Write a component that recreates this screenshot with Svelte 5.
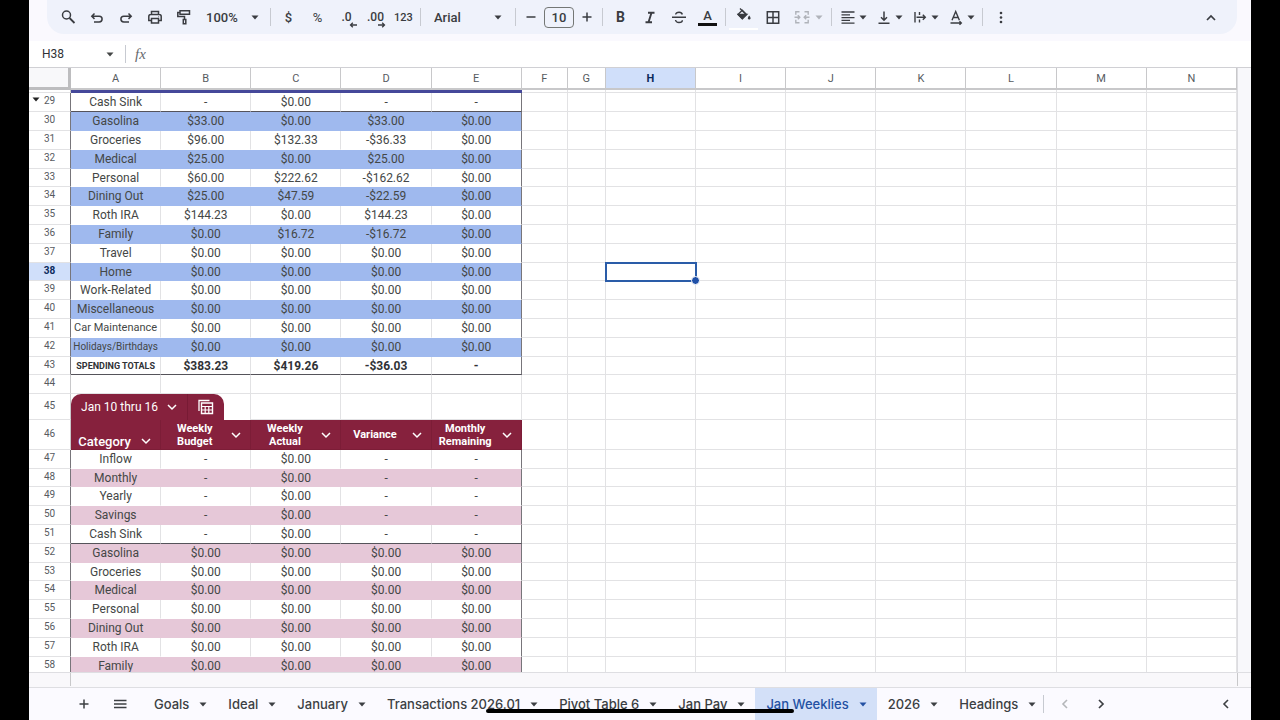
<script>
    const columns = ['A', 'B', 'C', 'D', 'E', 'F', 'G', 'H', 'I', 'J', 'K', 'L', 'M', 'N'];
    const spare = columns.slice(5);

    const none = ['-', '$0.00', '-', '-'];
    const zero = ['$0.00', '$0.00', '$0.00', '$0.00'];

    const rows = [
        { n: 29, name: 'Cash Sink', values: none, theme: 'blue', edge: true },
        { n: 30, name: 'Gasolina', values: ['$33.00', '$0.00', '$33.00', '$0.00'], theme: 'blue' },
        { n: 31, name: 'Groceries', values: ['$96.00', '$132.33', '-$36.33', '$0.00'], theme: 'blue' },
        { n: 32, name: 'Medical', values: ['$25.00', '$0.00', '$25.00', '$0.00'], theme: 'blue' },
        { n: 33, name: 'Personal', values: ['$60.00', '$222.62', '-$162.62', '$0.00'], theme: 'blue' },
        { n: 34, name: 'Dining Out', values: ['$25.00', '$47.59', '-$22.59', '$0.00'], theme: 'blue' },
        { n: 35, name: 'Roth IRA', values: ['$144.23', '$0.00', '$144.23', '$0.00'], theme: 'blue' },
        { n: 36, name: 'Family', values: ['$0.00', '$16.72', '-$16.72', '$0.00'], theme: 'blue' },
        { n: 37, name: 'Travel', values: zero, theme: 'blue' },
        { n: 38, name: 'Home', values: zero, theme: 'blue' },
        { n: 39, name: 'Work-Related', values: zero, theme: 'blue' },
        { n: 40, name: 'Miscellaneous', values: zero, theme: 'blue' },
        { n: 41, name: 'Car Maintenance', values: zero, theme: 'blue', size: 'small' },
        { n: 42, name: 'Holidays/Birthdays', values: zero, theme: 'blue', size: 'smaller' },
        { n: 43, name: 'SPENDING TOTALS', values: ['$383.23', '$419.26', '-$36.03', '-'], theme: 'blue', total: true, edge: true },
        { n: 44, kind: 'blank' },
        { n: 45, kind: 'tab' },
        { n: 46, kind: 'head' },
        { n: 47, name: 'Inflow', values: none, theme: 'pink' },
        { n: 48, name: 'Monthly', values: none, theme: 'pink' },
        { n: 49, name: 'Yearly', values: none, theme: 'pink' },
        { n: 50, name: 'Savings', values: none, theme: 'pink' },
        { n: 51, name: 'Cash Sink', values: none, theme: 'pink', edge: true },
        { n: 52, name: 'Gasolina', values: zero, theme: 'pink' },
        { n: 53, name: 'Groceries', values: zero, theme: 'pink' },
        { n: 54, name: 'Medical', values: zero, theme: 'pink' },
        { n: 55, name: 'Personal', values: zero, theme: 'pink' },
        { n: 56, name: 'Dining Out', values: zero, theme: 'pink' },
        { n: 57, name: 'Roth IRA', values: zero, theme: 'pink' },
        { n: 58, name: 'Family', values: zero, theme: 'pink' }
    ];

    const headings = ['Weekly Budget', 'Weekly Actual', 'Variance', 'Monthly Remaining'];
    const sheets = ['Goals', 'Ideal', 'January', 'Transactions 2026.01', 'Pivot Table 6', 'Jan Pay', 'Jan Weeklies', '2026', 'Headings'];

    let activeSheet = $state('Jan Weeklies');
    let fontSize = $state(10);
    let formula = $state('');
    const selected = { col: 'H', row: 38 };
</script>

{#snippet caret()}
    <svg class="caret" width="8" height="5" viewBox="0 0 8 5" aria-hidden="true"><path d="M0.5 0.5h7L4 4.5z" fill="currentColor" /></svg>
{/snippet}

{#snippet chevron()}
    <svg width="16" height="16" viewBox="0 0 16 16" fill="none" stroke="currentColor" stroke-width="1.5" aria-hidden="true"><path d="M4 6l4 4 4-4" /></svg>
{/snippet}

{#snippet icon(name)}
    <svg width="18" height="18" viewBox="0 0 18 18" fill="none" stroke="currentColor" stroke-width="1.5" aria-hidden="true">
        {#if name === 'search'}
            <circle cx="7.5" cy="7" r="4" /><path d="M10.5 10l5 5" stroke-width="1.8" />
        {:else if name === 'undo'}
            <path d="M6.500 5.500L3.800 8.200l2.700 2.700M4 8.200h7.200a2.900 2.900 0 0 1 0 5.800H6" />
        {:else if name === 'redo'}
            <path d="M11.500 5.500l2.700 2.700-2.700 2.700M14 8.200H6.800a2.900 2.900 0 0 0 0 5.800H12" />
        {:else if name === 'print'}
            <path d="M5.500 6.500V3.500h7v3M5 12.500H2.800V8.500a2 2 0 0 1 2-2h8.400a2 2 0 0 1 2 2v4H13" /><path d="M5.500 10.500h7v4.500h-7z" /><circle cx="12.700" cy="8.700" r=".5" fill="currentColor" stroke="none" />
        {:else if name === 'paint'}
            <path d="M5 2.800h9.500v3.500H5zM5 4.500H2.800v4h6.700v2.800" /><path d="M8.300 11.500h2.500v4.200H8.300z" />
        {:else if name === 'strike'}
            <path d="M2 9.200h14M12.300 6.500c-.3-1.500-1.500-2.300-3.200-2.300-2 0-3.400.9-3.400 2.400M5.500 12c.3 1.700 1.700 2.500 3.500 2.500s3.400-.8 3.400-2.300" stroke-width="1.400" />
        {:else if name === 'italic'}
            <path d="M7 4.800h6.500M4.500 14.200H11M10.500 4.800L7.500 14.200" stroke-width="1.900" />
        {:else if name === 'fill'}
            <path d="M5 1.500l6 6M3 7.500L7.300 3.300l4.200 4.200-4.200 4.200z" stroke-width="1.400" /><path d="M3.500 7.500h8L7.300 11.500z" fill="currentColor" /><path d="M14.200 8.500c2.500 3 1 4 0 4s-2.500-1 0-4z" fill="currentColor" stroke="none" />
        {:else if name === 'borders'}
            <path d="M3.300 3.800h11.400v11.400H3.300zM9 4v11M3 9.500h12" />
        {:else if name === 'merge'}
            <path d="M6.500 3.800H2.800v3M2.800 11.800v3h3.700M11.500 3.800h3.700v3M15.200 11.800v3h-3.700M1.500 9.300h5M4.800 7.300l2 2-2 2M16.500 9.300h-5M13.200 7.300l-2 2 2 2" stroke-width="1.400" />
        {:else if name === 'align'}
            <path d="M2.500 4h13M2.500 6.800h8.500M2.500 9.600h13M2.500 12.400h8.500M2.500 15.200h13" stroke-width="1.300" />
        {:else if name === 'valign'}
            <path d="M9 3.500v8.500M6 9.200l3 3 3-3M3.500 15.300h11" />
        {:else if name === 'wrap'}
            <path d="M4 4v10.500M8.500 4v3M8.500 11.500v3M5.500 9.300h9M11.800 6.800l2.500 2.500-2.500 2.500" stroke-width="1.400" />
        {:else if name === 'rotate'}
            <path d="M5 12.200l3.700-8.700 3.700 8.700M6.200 9.500h5M3.500 15h11M12.500 13.200l1.800 1.800-1.800 1.800" stroke-width="1.400" />
        {:else if name === 'more'}
            <g fill="currentColor" stroke="none"><circle cx="9" cy="5" r="1.300" /><circle cx="9" cy="9.500" r="1.300" /><circle cx="9" cy="14" r="1.300" /></g>
        {:else if name === 'up'}
            <path d="M5 12l4-4 4 4" stroke-width="1.700" />
        {:else if name === 'left'}
            <path d="M11 5L7 9l4 4" stroke-width="1.600" />
        {:else if name === 'right'}
            <path d="M7 5l4 4-4 4" stroke-width="1.700" />
        {:else if name === 'plus'}
            <path d="M9 4.500v9M4.500 9h9" />
        {:else if name === 'minus'}
            <path d="M4.500 9h9" />
        {:else if name === 'menu'}
            <path d="M3 5.500h12.500M3 9h12.500M3 12.500h12.500" stroke-width="1.400" />
        {:else if name === 'table'}
            <path d="M2 13V2.500h10.500" stroke-width="1.300" /><path d="M4.500 5h11v10.500h-11z" stroke-width="1.400" /><path d="M4.500 8.500h11M4.500 12h11M8.200 8.500v7M11.800 8.500v7" stroke-width="1.200" />
        {/if}
    </svg>
{/snippet}

{#snippet tool(name, label)}
    <button class="tool" aria-label={label}>{@render icon(name)}</button>
{/snippet}

{#snippet combo(name, label)}
    <button class="combo" aria-label={label}>{@render icon(name)}{@render caret()}</button>
{/snippet}

{#snippet spareCells(n)}
    {#each spare as col}
        <td class:selected={col === selected.col && n === selected.row}></td>
    {/each}
{/snippet}

<main class="screen">
    <div class="app">
        <header class="top">
            <div class="toolbar" role="toolbar" aria-label="Formatting">
                {@render tool('search', 'Search menus')}
                {@render tool('undo', 'Undo')}
                {@render tool('redo', 'Redo')}
                {@render tool('print', 'Print')}
                {@render tool('paint', 'Paint format')}
                <span class="picker zoom">
                    <select aria-label="Zoom"><option>100%</option></select>
                    {@render caret()}
                </span>
                <span class="sep"></span>
                <button class="tool" aria-label="Currency">$</button>
                <button class="tool light" aria-label="Percent">%</button>
                <button class="tool decimal" aria-label="Decrease decimal places">
                    <span>.0</span>
                    <svg width="8" height="6" viewBox="0 0 8 6" fill="none" stroke="currentColor" stroke-width="1.300"><path d="M8 3H1.500M3.800.7L1.500 3l2.300 2.300" /></svg>
                </button>
                <button class="tool decimal" aria-label="Increase decimal places">
                    <span>.00</span>
                    <svg width="8" height="6" viewBox="0 0 8 6" fill="none" stroke="currentColor" stroke-width="1.300"><path d="M0 3h6.500M4.200.7L6.500 3 4.200 5.300" /></svg>
                </button>
                <button class="tool digits" aria-label="More formats">123</button>
                <span class="sep"></span>
                <span class="picker font">
                    <select aria-label="Font"><option>Arial</option></select>
                    {@render caret()}
                </span>
                <span class="sep"></span>
                <button class="step" aria-label="Decrease font size" onclick={() => fontSize--}>{@render icon('minus')}</button>
                <input class="size" aria-label="Font size" bind:value={fontSize} />
                <button class="step" aria-label="Increase font size" onclick={() => fontSize++}>{@render icon('plus')}</button>
                <span class="sep"></span>
                <button class="tool bold" aria-label="Bold">B</button>
                {@render tool('italic', 'Italic')}
                {@render tool('strike', 'Strikethrough')}
                <button class="tool" aria-label="Text color"><span class="ink">A</span></button>
                <span class="sep"></span>
                <button class="tool paint" aria-label="Fill color">{@render icon('fill')}</button>
                {@render tool('borders', 'Borders')}
                <button class="combo merge" aria-label="Merge cells" disabled>{@render icon('merge')}{@render caret()}</button>
                <span class="sep"></span>
                {@render combo('align', 'Horizontal align')}
                {@render combo('valign', 'Vertical align')}
                {@render combo('wrap', 'Text wrapping')}
                {@render combo('rotate', 'Text rotation')}
                <span class="sep"></span>
                {@render tool('more', 'More')}
                <span class="push">{@render tool('up', 'Hide the menus')}</span>
            </div>
        </header>

        <div class="formula-bar">
            <input class="name-box" aria-label="Name box" value="H38" />
            {@render caret()}
            <span class="sep"></span>
            <label class="fx" for="formula">fx</label>
            <input id="formula" class="formula" bind:value={formula} />
        </div>

        <div class="sheet">
            <div class="grid">
                <table>
                    <colgroup>
                        <col class="col-num" />
                        {#each columns as col}
                            <col class={col === 'F' ? 'col-f' : col === 'G' ? 'col-g' : 'col-wide'} />
                        {/each}
                    </colgroup>
                    <thead>
                        <tr>
                            <td class="corner"></td>
                            {#each columns as col}
                                <th scope="col" class:active={col === selected.col}>{col}</th>
                            {/each}
                        </tr>
                    </thead>
                    <tbody>
                        <tr class="sliver">
                            <th></th>
                            <td class="band" colspan="5"></td>
                            {#each spare as _}<td></td>{/each}
                        </tr>
                        {#each rows as row}
                            <tr
                                class={[row.kind, row.theme]}
                                class:short={row.n % 5 === 3}
                                class:striped={row.theme && row.n % 2 === 0}
                                class:edge={row.edge}
                                class:total={row.total}
                            >
                                <th scope="row" class:active={row.n === selected.row}>
                                    {#if row.n === 29}<span class="group">{@render caret()}</span>{/if}{row.n}
                                </th>
                                {#if row.kind === 'blank'}
                                    {#each headings as _}<td></td>{/each}<td></td>
                                {:else if row.kind === 'tab'}
                                    <td colspan="2">
                                        <div class="table-tab">
                                            <button class="table-name">Jan 10 thru 16 {@render chevron()}</button>
                                            <button class="table-view" aria-label="Table views">{@render icon('table')}</button>
                                        </div>
                                    </td>
                                    <td></td><td></td><td></td>
                                {:else if row.kind === 'head'}
                                    <td class="category">
                                        <div class="heading"><span>Category</span><button aria-label="Category menu">{@render chevron()}</button></div>
                                    </td>
                                    {#each headings as heading}
                                        <td>
                                            <div class="heading"><span>{heading}</span><button aria-label="{heading} menu">{@render chevron()}</button></div>
                                        </td>
                                    {/each}
                                {:else}
                                    <td class={['name', row.size]}>{row.name}</td>
                                    {#each row.values as value}
                                        <td>{value}</td>
                                    {/each}
                                {/if}
                                {@render spareCells(row.n)}
                            </tr>
                        {/each}
                    </tbody>
                </table>
            </div>
            <div class="v-scroll"></div>
        </div>
        <div class="h-scroll"><span></span><i></i></div>

        <nav class="tabs" aria-label="Sheets">
            <button class="nav-btn" aria-label="Add sheet">{@render icon('plus')}</button>
            <button class="nav-btn" aria-label="All sheets">{@render icon('menu')}</button>
            <div class="sheet-list">
                {#each sheets as sheet}
                    <button class="tab" class:current={sheet === activeSheet} onclick={() => (activeSheet = sheet)}>
                        {sheet}
                        {@render caret()}
                    </button>
                {/each}
            </div>
            <span class="sep"></span>
            <button class="nav-btn faded" aria-label="Scroll left">{@render icon('left')}</button>
            <button class="nav-btn" aria-label="Scroll right">{@render icon('right')}</button>
            <button class="nav-btn push" aria-label="Show side panel">{@render icon('left')}</button>
        </nav>
    </div>
    <div class="home-bar"></div>
</main>

<style>
    :global(body) {
        background: #000;
    }

    .screen {
        position: relative;
        box-sizing: border-box;
        height: 100vh;
        padding: 0 29px;
        background: #000;
        font-family: Roboto, "Liberation Sans", sans-serif;
        color: #444746;
        overflow: hidden;
    }

    .app {
        display: flex;
        flex-direction: column;
        height: 100%;
        background: #fff;
    }

    button, input, select {
        margin: 0;
        padding: 0;
        border: none;
        background: none;
        color: inherit;
        font: inherit;
        outline: none;
    }

    button {
        display: flex;
        align-items: center;
        justify-content: center;
    }

    svg {
        flex: none;
        display: block;
    }

    .top {
        flex: none;
        padding: 0 14px 7px 18px;
        background: #faf9fe;
    }

    .toolbar {
        display: flex;
        align-items: center;
        height: 34px;
        padding: 0 12px 0 6px;
        border-radius: 0 0 17px 17px;
        background: #eff2fb;
        color: #3a3c41;
        font-size: 13px;
        font-weight: 500;
    }

    .tool {
        width: 29px;
        height: 26px;
    }

    .light {
        font-weight: 400;
    }

    .decimal {
        position: relative;
        font-size: 12px;
    }

    .decimal svg {
        position: absolute;
        right: 4px;
        bottom: 2px;
    }

    .digits {
        width: 27px;
        font-size: 11px;
    }

    .bold {
        font-size: 14px;
        font-weight: 700;
    }

    .ink {
        padding: 0 5px;
        border-bottom: 3px solid #111;
        font-size: 13px;
        line-height: 14px;
    }

    .paint {
        border-bottom: 2px solid #fff;
    }

    .sep {
        flex: none;
        width: 1px;
        height: 18px;
        margin: 0 3px;
        background: #c7cad1;
    }

    .picker {
        display: grid;
        align-items: center;
    }

    .picker > :global(*) {
        grid-area: 1 / 1;
    }

    .picker select {
        appearance: none;
        width: 100%;
    }

    .picker .caret {
        justify-self: end;
        pointer-events: none;
    }

    .zoom {
        width: 53px;
        padding: 0 8px 0 8px;
    }

    .font {
        width: 68px;
        padding: 0 10px;
    }

    .step {
        width: 24px;
        height: 26px;
    }

    .size {
        box-sizing: border-box;
        width: 30px;
        height: 21px;
        margin: 0 1px;
        border: 1px solid #747775;
        border-radius: 4px;
        text-align: center;
    }

    .combo {
        gap: 2px;
        width: 36px;
        height: 26px;
    }

    .merge {
        gap: 4px;
        width: 41px;
        color: #b0b3ba;
    }

    .push {
        margin-left: auto;
    }

    .formula-bar {
        flex: none;
        display: flex;
        align-items: center;
        height: 26px;
        padding-left: 13px;
        border-bottom: 1px solid #d0d0d4;
        font-size: 12px;
    }

    .name-box {
        width: 64px;
        color: #303236;
    }

    .formula-bar .sep {
        margin: 0 9px 0 11px;
    }

    .fx {
        font: italic 15px "Liberation Serif", serif;
        color: #66696d;
    }

    .formula {
        flex: 1;
        margin-left: 8px;
    }

    .sheet {
        flex: 1;
        display: flex;
        min-height: 0;
    }

    .grid {
        flex: 1;
        overflow: hidden;
    }

    table {
        width: 100%;
        table-layout: fixed;
        border-collapse: separate;
        border-spacing: 0;
    }

    .col-num {
        width: 42px;
    }

    .col-wide {
        width: 90px;
    }

    .col-f {
        width: 46px;
    }

    .col-g {
        width: 38px;
    }

    th, td {
        box-sizing: border-box;
        height: 19px;
        padding: 0;
        border-right: 1px solid #e2e2e4;
        border-bottom: 1px solid #e2e2e4;
        text-align: center;
        vertical-align: middle;
        white-space: nowrap;
        font-size: 12px;
        line-height: 14px;
    }

    thead th {
        height: 22px;
        padding-top: 2px;
        border-right-color: #c8c8ca;
        border-bottom: 2px solid #c8c8ca;
        font-size: 11px;
        font-weight: 400;
        color: #575b5f;
    }

    .corner {
        border-right: 3px solid #bdbdbf;
        border-bottom: 3px solid #bdbdbf;
        background: #f8f8fa;
    }

    tbody th {
        position: relative;
        padding-bottom: 2px;
        border-right-color: #c8c8ca;
        font-size: 10px;
        font-weight: 400;
        color: #575b5f;
    }

    th.active {
        background: #d0dffa;
        color: #0b2a5c;
        font-weight: 700;
    }

    .group {
        position: absolute;
        left: 3px;
        top: 4px;
        color: #222;
    }

    .sliver th, .sliver td {
        height: 3px;
        padding: 0;
    }

    .sliver .band {
        background: #45489a;
        border-color: #45489a;
    }

    .short > th, .short > td {
        height: 18px;
    }

    .blue th, .pink th {
        border-right-color: #77757a;
    }

    .blue td:nth-child(6), .pink td:nth-child(6) {
        border-right-color: #77757a;
    }

    .blue td:nth-child(-n + 6), .pink td:nth-child(-n + 6) {
        border-bottom-color: transparent;
    }

    .striped td:nth-child(-n + 5) {
        border-right-color: transparent;
    }

    .blue.striped td:nth-child(-n + 6) {
        background: #9fb9ee;
    }

    .pink.striped td:nth-child(-n + 6) {
        background: #e6c8d8;
    }

    .edge td:nth-child(-n + 6) {
        border-bottom-color: #55535a;
    }

    .name.small {
        font-size: 11px;
    }

    .name.smaller {
        font-size: 10px;
    }

    .total td {
        color: #303236;
        font-weight: 700;
    }

    .total .name {
        font-size: 9px;
    }

    .selected {
        position: relative;
        outline: 2px solid #2a5ca8;
        outline-offset: -1px;
    }

    .selected::after {
        content: "";
        position: absolute;
        right: -5px;
        bottom: -5px;
        width: 7px;
        height: 7px;
        border: 1px solid #fff;
        border-radius: 50%;
        background: #1f50a8;
    }

    .tab > th, .tab > td {
        height: 26px;
    }

    .tab td[colspan] {
        border-bottom: none;
    }

    .table-tab {
        display: flex;
        width: 153px;
        height: 26px;
        border-radius: 10px 10px 0 0;
        background: #86213d;
        color: #fff;
    }

    .table-name {
        flex: 1;
        justify-content: space-between;
        padding: 0 7px 0 10px;
        border-right: 1px solid #781a34;
    }

    .table-view {
        width: 36px;
    }

    .head > th, .head > td {
        height: 30px;
    }

    .head td:nth-child(-n + 6) {
        border-color: #7c1d37;
        background: #86213d;
        color: #fff;
    }

    .heading {
        display: flex;
        align-items: center;
        padding-right: 6px;
        font-size: 11px;
        font-weight: 700;
        line-height: 13px;
        white-space: normal;
    }

    .heading span {
        flex: 1;
    }

    .category {
        vertical-align: bottom;
    }

    .category .heading {
        font-size: 13px;
        font-weight: 500;
    }

    .v-scroll {
        width: 14px;
        border-left: 1px solid #dcdce0;
        box-sizing: border-box;
        background: #f8f8fb;
    }

    .h-scroll {
        flex: none;
        display: flex;
        justify-content: space-between;
        box-sizing: border-box;
        height: 16px;
        padding: 0 13px 0 41px;
        border-top: 1px solid #dedee2;
        border-bottom: 1px solid #dedee2;
        background: #f9f8fb;
    }

    .h-scroll span, .h-scroll i {
        width: 1px;
        height: 13px;
        background: #c8c8ca;
    }

    .tabs {
        flex: none;
        display: flex;
        align-items: center;
        height: 32px;
        padding: 0 8px 0 37px;
        background: #fbfaff;
        font-family: Inter, Roboto, sans-serif;
        font-size: 13px;
        font-weight: 500;
        color: #3c3f43;
    }

    .nav-btn {
        width: 36px;
        height: 32px;
    }

    .faded {
        color: #b4b6ba;
    }

    .nav-btn.push {
        width: 34px;
    }

    .sheet-list {
        display: flex;
        height: 100%;
        padding-left: 5px;
    }

    button.tab {
        gap: 10px;
        padding: 0 10px 0 11px;
        white-space: nowrap;
    }

    button.tab:last-child {
        padding-right: 4px;
    }

    button.current {
        background: #d3e0f8;
        color: #2451a3;
    }

    .home-bar {
        position: absolute;
        left: 38%;
        right: 38%;
        bottom: 7px;
        height: 4px;
        border-radius: 2px;
        background: #000;
    }
</style>
